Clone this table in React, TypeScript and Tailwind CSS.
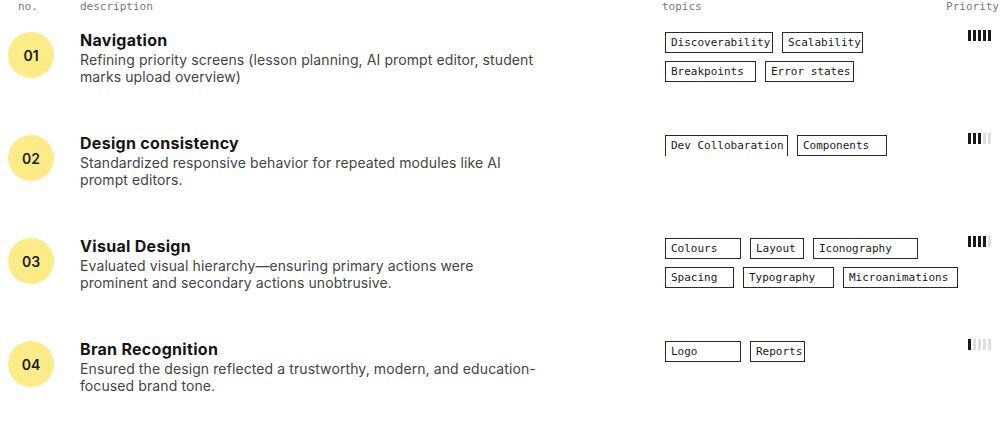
import React from "react";

type Row = {
  no: string;
  title: string;
  lines: string[];
  tags: { label: string; w: string; open?: boolean }[][];
  priority: number;
};

const rows: Row[] = [
  {
    no: "01",
    title: "Navigation",
    lines: [
      "Refining priority screens (lesson planning, AI prompt editor, student",
      "marks upload overview)",
    ],
    tags: [
      [
        { label: "Discoverability", w: "w-[108px]" },
        { label: "Scalability", w: "w-[81px]" },
      ],
      [
        { label: "Breakpoints", w: "w-[91px]" },
        { label: "Error states", w: "w-[89px]" },
      ],
    ],
    priority: 5,
  },
  {
    no: "02",
    title: "Design consistency",
    lines: [
      "Standardized responsive behavior for repeated modules like AI",
      "prompt editors.",
    ],
    tags: [
      [
        { label: "Dev Collobaration", w: "w-[123px]", open: true },
        { label: "Components", w: "w-[90px]" },
      ],
    ],
    priority: 3,
  },
  {
    no: "03",
    title: "Visual Design",
    lines: [
      "Evaluated visual hierarchy\u2014ensuring primary actions were",
      "prominent and secondary actions unobtrusive.",
    ],
    tags: [
      [
        { label: "Colours", w: "w-[76px]" },
        { label: "Layout", w: "w-[54px]" },
        { label: "Iconography", w: "w-[105px]" },
      ],
      [
        { label: "Spacing", w: "w-[69px]" },
        { label: "Typography", w: "w-[91px]" },
        { label: "Microanimations", w: "w-[115px]" },
      ],
    ],
    priority: 4,
  },
  {
    no: "04",
    title: "Bran Recognition",
    lines: [
      "Ensured the design reflected a trustworthy, modern, and education-",
      "focused brand tone.",
    ],
    tags: [
      [
        { label: "Logo", w: "w-[76px]" },
        { label: "Reports", w: "w-[55px]" },
      ],
    ],
    priority: 1,
  },
];

const mono = "font-['DejaVu_Sans_Mono','Liberation_Mono',monospace]";

const Bars = ({ level }: { level: number }) => (
  <div className="flex gap-[2px]">
    {[0, 1, 2, 3, 4].map((i) => (
      <div
        key={i}
        className={
          i < level ? "w-[3px] h-[11px] bg-[#1a1a1a]" : "w-[3px] h-[11px] bg-[#dedede]"
        }
      />
    ))}
  </div>
);

export default function App() {
  return (
    <div className="w-[1000px] h-[440px] bg-white font-['Inter',sans-serif] text-[#111] overflow-hidden">
      <div className={`flex h-[30px] text-[11px] leading-[14px] text-[#7a7a7a] ${mono}`}>
        <div className="w-[80px] pl-[18px]">no.</div>
        <div className="w-[582px]">description</div>
        <div className="flex-1">topics</div>
        <div className="pr-[1px]">Priority</div>
      </div>

      {rows.map((r) => (
        <div key={r.no} className="flex h-[103px]">
          <div className="w-[80px] pl-[8px] pt-[2px]">
            <div className="w-[46px] h-[46px] rounded-full bg-[#fcec88] flex items-center justify-center text-[14px] font-semibold text-[#1a1a1a]">
              {r.no}
            </div>
          </div>
          <div className="w-[585px]">
            <div className="text-[16px] leading-[20px] font-bold tracking-[0.3px] text-[#151515]">
              {r.title}
            </div>
            <div className="mt-[1px] text-[14px] leading-[17px] tracking-[0.1px] text-[#444]">
              {r.lines.map((l) => (
                <div key={l} className="whitespace-nowrap">
                  {l}
                </div>
              ))}
            </div>
          </div>
          <div className={`w-[303px] pt-[2px] flex flex-col gap-[8px] ${mono}`}>
            {r.tags.map((row, i) => (
              <div key={i} className="flex gap-[9px]">
                {row.map((t) => (
                  <div
                    key={t.label}
                    className={`${t.w} h-[21px] border border-[#2a2a2a] ${
                      t.open ? "border-b-0" : ""
                    } pl-[5px] text-[11px] leading-[19px] text-[#1a1a1a] whitespace-nowrap`}
                  >
                    {t.label}
                  </div>
                ))}
              </div>
            ))}
          </div>
          <Bars level={r.priority} />
        </div>
      ))}
    </div>
  );
}
